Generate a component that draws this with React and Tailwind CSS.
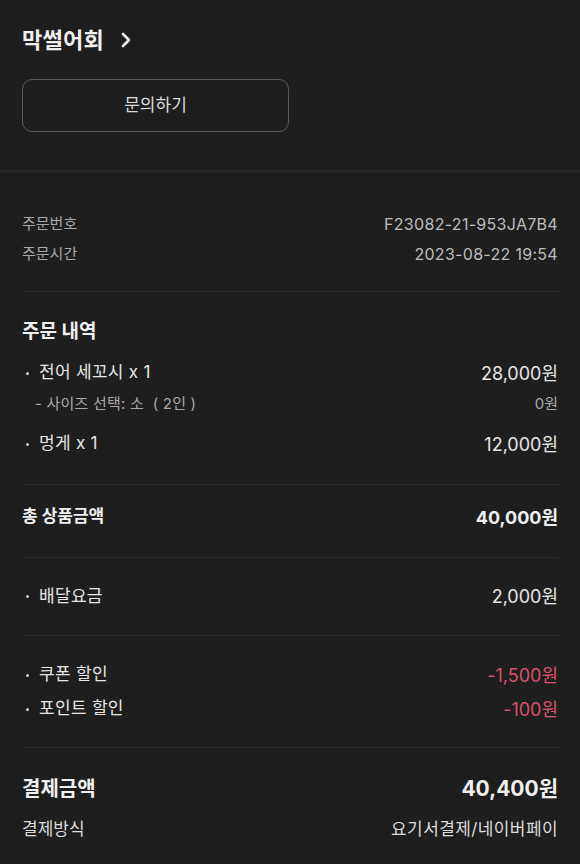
import React from 'react';

const font = { fontFamily: 'Inter, "Noto Sans CJK KR", sans-serif' };

const Divider = () => <div className="mx-[22px] h-px bg-[#2c2c2c]" />;

const BulletRow = ({ label, value, valueClass = 'text-[#e6e6e6]' }) => (
  <div className="flex items-center justify-between h-[34px]">
    <div className="flex items-center text-[17px] text-[#e6e6e6]">
      <span className="ml-[4px] mr-[10px] w-[3px] h-[3px] rounded-full bg-[#d0d0d0]" />
      <span className="tracking-[0.3px]">{label}</span>
    </div>
    <span className={`text-[18px] ${valueClass}`}>{value}</span>
  </div>
);

const App = () => {
  return (
    <div className="w-[580px] h-[864px] bg-[#1e1e1e] overflow-hidden" style={font}>
      {/* Store header */}
      <div className="px-[22px] pt-[24px] pb-[38px]">
        <div className="flex items-center h-[32px] gap-[16px]">
          <span className="text-[22px] font-bold text-[#f0f0f0] tracking-[0.3px]">막썰어회</span>
          <svg width="12" height="16" viewBox="0 0 12 16" fill="none">
            <path d="M3 2l6 6-6 6" stroke="#f0f0f0" strokeWidth="2.6" strokeLinecap="round" strokeLinejoin="round" />
          </svg>
        </div>
        <button className="mt-[23px] w-[267px] h-[53px] rounded-[10px] border border-[#5a5a5a] text-[17px] text-[#dcdcdc]">
          문의하기
        </button>
      </div>

      <div className="h-[3px] bg-[#262626]" />

      {/* Order info */}
      <div className="px-[22px] pt-[36px] pb-[22px] text-[15px]">
        <div className="flex justify-between items-center h-[30px]">
          <span className="text-[#a8a8a8]">주문번호</span>
          <span className="text-[16px] text-[#bdbdbd] tracking-[0.3px]">F23082-21-953JA7B4</span>
        </div>
        <div className="flex justify-between items-center h-[30px]">
          <span className="text-[#a8a8a8]">주문시간</span>
          <span className="text-[16px] text-[#bdbdbd] tracking-[0.3px]">2023-08-22 19:54</span>
        </div>
      </div>

      <Divider />

      {/* Order items */}
      <div className="px-[22px] pt-[23px] pb-[23px]">
        <div className="h-[34px] flex items-center text-[19px] font-bold text-[#f0f0f0]">주문 내역</div>
        <div className="mt-[7px]">
          <BulletRow label="전어 세꼬시 x 1" value="28,000원" />
        </div>
        <div className="flex justify-between items-center h-[28px] text-[15px] text-[#a8a8a8]">
          <span className="pl-[13px] whitespace-pre tracking-[0.2px]">- 사이즈 선택: 소  ( 2인 )</span>
          <span>0원</span>
        </div>
        <div className="mt-[9px]">
          <BulletRow label="멍게 x 1" value="12,000원" />
        </div>
      </div>

      <Divider />

      <div className="px-[22px] h-[72px] pt-[17px]">
        <div className="h-[30px] flex items-center justify-between font-bold text-[#f0f0f0]">
          <span className="text-[17px]">총 상품금액</span>
          <span className="text-[18px]">40,000원</span>
        </div>
      </div>

      <Divider />

      <div className="px-[22px] h-[77px] flex flex-col justify-center">
        <BulletRow label="배달요금" value="2,000원" />
      </div>

      <Divider />

      <div className="px-[22px] pt-[22px] pb-[21px]">
        <BulletRow label="쿠폰 할인" value="-1,500원" valueClass="text-[#d9506e]" />
        <BulletRow label="포인트 할인" value="-100원" valueClass="text-[#d9506e]" />
      </div>

      <Divider />

      {/* Payment */}
      <div className="px-[22px] pt-[23px]">
        <div className="flex justify-between items-center h-[36px]">
          <span className="text-[20px] font-bold text-[#f0f0f0]">결제금액</span>
          <span className="text-[21px] font-bold text-[#f0f0f0]">40,400원</span>
        </div>
        <div className="flex justify-between items-center h-[30px] mt-[8px] text-[17px] text-[#dcdcdc]">
          <span>결제방식</span>
          <span className="tracking-[0.4px]">요기서결제/네이버페이</span>
        </div>
      </div>
    </div>
  );
};

export default App;
